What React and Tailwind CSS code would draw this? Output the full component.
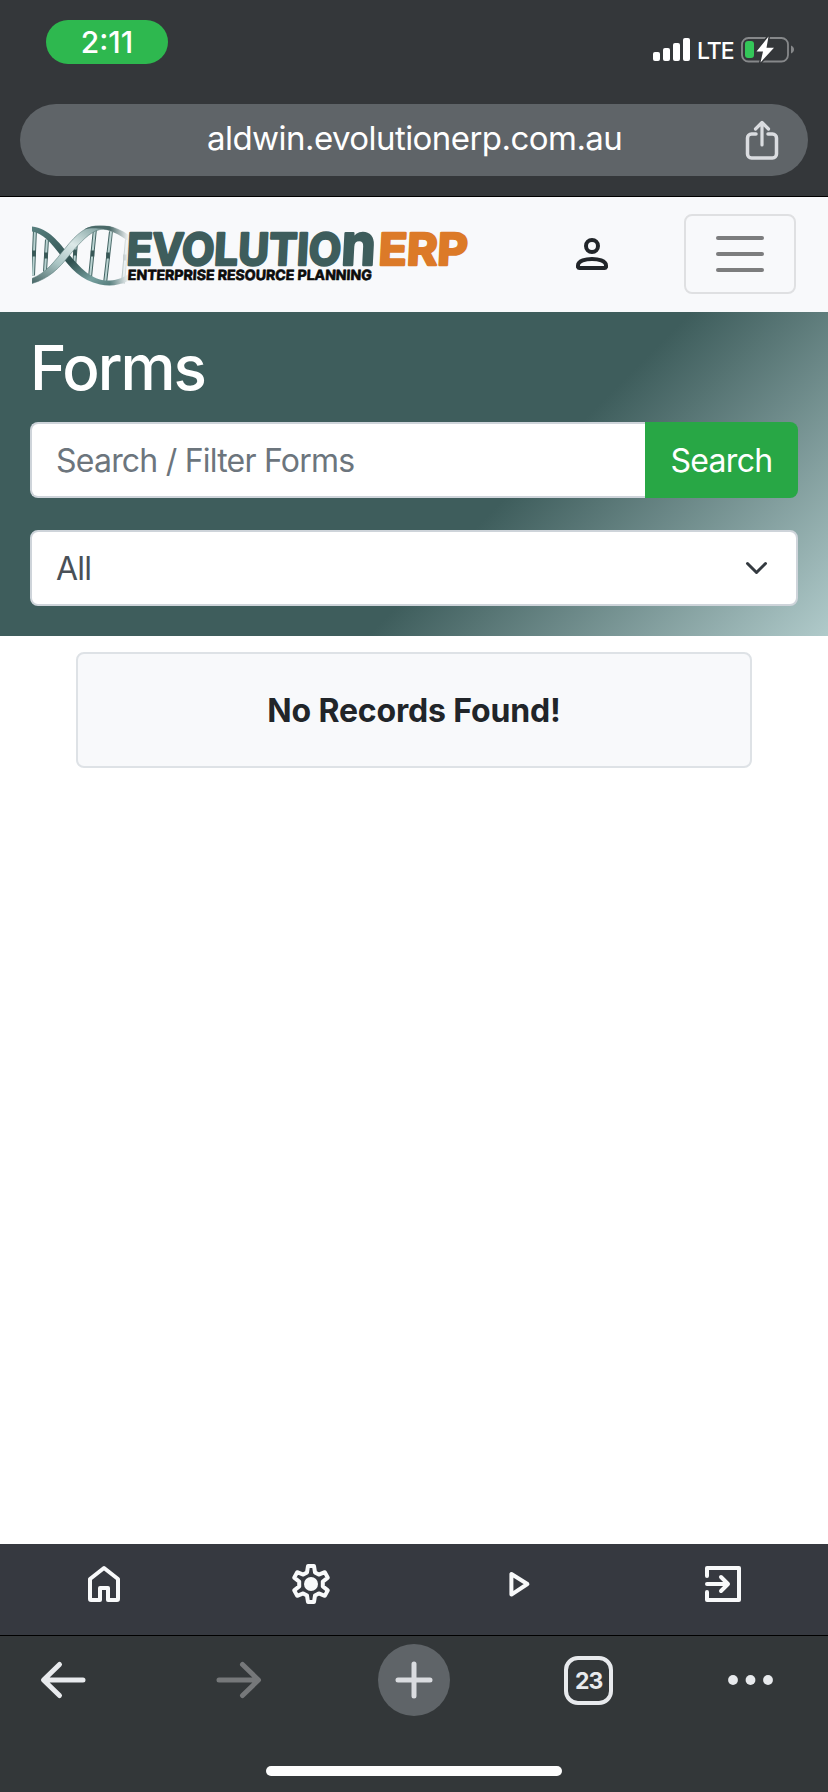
import React from "react";

const StatusBar = () => {
  return (
    <div className="flex h-[104px] justify-between pl-[46px] pr-[33px]">
      <div className="mt-5 flex h-11 w-[122px] items-center justify-center rounded-full bg-[#2eb84f] pt-px text-[30px] font-medium text-white">
        2:11
      </div>
      <div className="mt-[34px] flex h-8 items-center">
        <svg width="37" height="32" viewBox="0 0 37 32" fill="#fff">
          <rect x="0" y="18" width="7" height="9" rx="2" />
          <rect x="10" y="14" width="7" height="13" rx="2" />
          <rect x="20" y="9" width="7" height="18" rx="2" />
          <rect x="30" y="4" width="7" height="23" rx="2" />
        </svg>
        <span className="ml-[7px] w-9 pt-px text-[23px] font-medium leading-8 tracking-[-1px] text-white">
          LTE
        </span>
        <svg
          className="ml-2"
          width="54"
          height="32"
          viewBox="0 0 54 32"
          fill="none"
        >
          <rect x="1" y="4" width="46" height="23.5" rx="6.5" stroke="#86888a" strokeWidth="1.8" />
          <path d="M50 11.5v8c4-1.500 4-6.500 0-8z" fill="#86888a" />
          <rect x="4" y="7" width="9" height="17" rx="3" fill="#34c759" />
          <path
            d="M27.500 2.500L15.500 17.500h6.500l-2.500 11L33 13.800h-7.500z"
            fill="#fff"
            stroke="#34373a"
            strokeWidth="3"
            strokeLinejoin="round"
            paintOrder="stroke"
          />
        </svg>
      </div>
    </div>
  );
};

const AddressBar = () => {
  return (
    <div className="mx-5 flex h-[72px] items-center rounded-full bg-[#5f6468]">
      <span className="ml-[187px] w-[431px] whitespace-nowrap pb-1 text-[33px] leading-[64px] tracking-[-0.55px] text-white">
        aldwin.evolutionerp.com.au
      </span>
      <svg
        className="ml-[106px]"
        width="36"
        height="42"
        viewBox="0 0 36 42"
        fill="none"
        stroke="#dadce0"
        strokeLinecap="round"
        strokeLinejoin="round"
      >
        <path d="M12 15H7.500a4 4 0 0 0-4 4v16a4 4 0 0 0 4 4h21a4 4 0 0 0 4-4V19a4 4 0 0 0-4-4H24" strokeWidth="3.500" />
        <path d="M18 26V4M11.500 10L18 3.500l6.500 6.500" strokeWidth="3.200" />
      </svg>
    </div>
  );
};

const Logo = () => {
  return (
    <svg
      width="450"
      height="90"
      viewBox="0 -15.500 450 90"
      className="ml-8 overflow-visible"
    >
      <defs>
        <linearGradient id="strand" x1="0" y1="1" x2="1" y2="0">
          <stop offset="0" stopColor="#486665" />
          <stop offset="0.3" stopColor="#a9c4c3" />
          <stop offset="0.55" stopColor="#dce9e8" />
          <stop offset="0.8" stopColor="#8aa9a8" />
          <stop offset="1" stopColor="#395958" />
        </linearGradient>
        <linearGradient id="back" x1="0" y1="0" x2="1" y2="1">
          <stop offset="0" stopColor="#58807f" />
          <stop offset="0.5" stopColor="#2f504f" />
          <stop offset="0.75" stopColor="#76a09f" />
          <stop offset="1" stopColor="#426665" />
        </linearGradient>
        <linearGradient id="fade">
          <stop offset="0.8" stopColor="#fff" />
          <stop offset="1" stopColor="#fff" stopOpacity="0" />
        </linearGradient>
        <mask id="fadeMask">
          <rect width="97" height="64" fill="url(#fade)" />
        </mask>
      </defs>

      <g mask="url(#fadeMask)">
        <g stroke="#446564" strokeWidth="4">
          <path d="M3 4L1 50M15 14l-2 32M44 16l-2 26M63 3l-5 49M79 6l-6 52M95 14l-4 44" />
        </g>
        <g stroke="#b9d2d1" strokeWidth="2">
          <path d="M3 4L1 50M15 14l-2 32M44 16l-2 26M63 3l-5 49M79 6l-6 52M95 14l-4 44" />
        </g>
        <g stroke="#385857" strokeWidth="3.500">
          <path d="M2 25v6M14 27v6M43 24v6M60.500 25v6M76 27v6M93 29v6" />
        </g>
        <path
          d="M0 1C17 3 27 17 37 29C48 42 60 56 78 55C86 54.500 92 52 97 48V55C87 60 78 61 68 59C49 55 38 42 28 29C19 17 11 8 0 6z"
          fill="url(#back)"
        />
        <path
          d="M0 58V53C15 47 23 35 33 23C45 8 54 0 68 0C80 0 90 5 97 10V13C87 7 77 3 68 4C58 6 48 17 38 29C27 43 17 53 0 58z"
          fill="url(#strand)"
          stroke="#5d7d7c"
          strokeWidth="0.600"
        />
        <path
          d="M52 4C57 1 62 0 68 0C80 0 90 5 97 10V16C87 9 77 3 66 3C61 2.500 56 3 52 4z"
          fill="#4a6968"
        />
      </g>

      <g
        fontFamily="Inter, sans-serif"
        fontWeight="700"
        strokeLinejoin="round"
        transform="skewX(-3)"
      >
        <text
          x="96"
          y="39"
          fontSize="44"
          textLength="249"
          lengthAdjust="spacingAndGlyphs"
          fill="#3e5d5c"
          stroke="#3e5d5c"
          strokeWidth="2.600"
        >
          EVOLUTIO<tspan fontSize="58">n</tspan>
        </text>
        <text
          x="348"
          y="39"
          fontSize="44"
          textLength="89"
          lengthAdjust="spacingAndGlyphs"
          fill="#dc7a28"
          stroke="#dc7a28"
          strokeWidth="2.600"
        >
          ERP
        </text>
        <text
          x="98.500"
          y="55"
          fontSize="14"
          textLength="244"
          lengthAdjust="spacingAndGlyphs"
          fill="#0b0b0b"
          stroke="#0b0b0b"
          strokeWidth="0.700"
        >
          ENTERPRISE RESOURCE PLANNING
        </text>
      </g>
    </svg>
  );
};

const Navbar = () => {
  return (
    <div className="flex h-[115px] items-center bg-[#f8f9fb]">
      <Logo />
      <svg
        className="ml-[86px]"
        width="48"
        height="48"
        viewBox="0 0 24 24"
        fill="none"
        stroke="#212529"
        strokeWidth="2"
      >
        <circle cx="12" cy="7.500" r="3" />
        <path d="M5 17.300C5 14.800 9 14 12 14s7 .8 7 3.300v.7a.8.8 0 0 1-.8.5H5.800A.8.8 0 0 1 5 18z" />
      </svg>
      <button className="mb-0.5 ml-[68px] flex h-20 w-28 flex-col items-center justify-center gap-3 rounded-lg border-2 border-[#dfe0e2]">
        <span className="h-1 w-12 rounded-full bg-[#7c7d7e]" />
        <span className="h-1 w-12 rounded-full bg-[#7c7d7e]" />
        <span className="h-1 w-12 rounded-full bg-[#7c7d7e]" />
      </button>
    </div>
  );
};

const FilterPanel = () => {
  return (
    <div className="h-[324px] bg-[linear-gradient(135deg,#3e5d5c_60%,#b0caca_100%)] px-[30px] pt-[19px]">
      <h1 className="h-[91px] text-[62px] font-medium leading-[74px] tracking-[-2px] text-white">
        Forms
      </h1>
      <div className="flex h-[76px]">
        <div className="flex flex-1 items-center rounded-l-lg border-2 border-r-0 border-[#ced4da] bg-white pl-6 pt-0.5 text-[32px] tracking-[-0.78px] text-[#6c757d]">
          Search / Filter Forms
        </div>
        <button className="w-[153px] rounded-r-lg bg-[#28a745] pt-0.5 text-[32px] tracking-[-0.7px] text-white">
          Search
        </button>
      </div>
      <div className="mt-8 flex h-[76px] items-center justify-between rounded-lg border-2 border-[#ced4da] bg-white pl-6 pr-7 pt-0.5 text-[32px] tracking-[-0.78px] text-[#495057]">
        All
        <svg
          width="24"
          height="24"
          viewBox="0 0 24 24"
          fill="none"
          stroke="#343a40"
          strokeWidth="3"
          strokeLinecap="round"
          strokeLinejoin="round"
        >
          <path d="M3.500 6.500l9 9 9-9" />
        </svg>
      </div>
    </div>
  );
};

const BottomNav = () => {
  return (
    <div className="grid h-[91px] grid-cols-4 justify-items-center bg-[#363940] pt-4">
      <svg width="48" height="48" viewBox="0 0 24 24" fill="none" stroke="#f8f9fa" strokeWidth="2" strokeLinejoin="round">
        <path d="M5 9.500l7-5.500 7 5.500V19.500a.5.5 0 0 1-.5.5H14v-6h-4v6H5.500a.5.5 0 0 1-.5-.5z" />
      </svg>
      <svg width="48" height="48" viewBox="0 0 24 24" fill="none" stroke="#f8f9fa" strokeWidth="2" strokeLinejoin="round">
        <path d="M10.500 3h3l.5 3.200 1.900 1.100 3-1.200 1.500 2.700-2.500 2v2.400l2.500 2-1.500 2.700-3-1.200-1.900 1.100-.5 3.200h-3l-.5-3.200-1.900-1.100-3 1.200-1.500-2.700 2.500-2v-2.400l-2.500-2 1.500-2.700 3 1.200L10 6.200z" />
        <circle cx="12" cy="12" r="3.500" fill="#f8f9fa" stroke="none" />
      </svg>
      <svg width="48" height="48" viewBox="0 0 24 24" fill="none" stroke="#f8f9fa" strokeWidth="2" strokeLinejoin="round">
        <path d="M8.700 7v10.300L16.700 12z" />
      </svg>
      <svg
        className="-translate-x-0.5"
        width="48"
        height="48"
        viewBox="0 0 24 24"
        fill="none"
        stroke="#f8f9fa"
        strokeWidth="2"
        strokeLinecap="round"
        strokeLinejoin="round"
      >
        <path d="M4 8V4h16v16H4v-4" />
        <path d="M4 12h9.500M11 8.500l3.500 3.500-3.500 3.500" />
      </svg>
    </div>
  );
};

const BrowserToolbar = () => {
  return (
    <div className="h-[157px] border-t border-black bg-[#333739]">
      <div className="flex h-[88px] items-center justify-between pl-[39px] pr-[54px]">
        <svg width="48" height="40" viewBox="0 0 48 40" fill="none" stroke="#e8eaed" strokeWidth="5" strokeLinecap="round" strokeLinejoin="round">
          <path d="M44 20H5M20.500 4.500L4.500 20l16 15.500" />
        </svg>
        <svg className="ml-[13px]" width="48" height="40" viewBox="0 0 48 40" fill="none" stroke="#76787a" strokeWidth="5" strokeLinecap="round" strokeLinejoin="round">
          <path d="M4 20h39M27.500 4.500l16 15.500-16 15.500" />
        </svg>
        <div className="flex h-[72px] w-[72px] items-center justify-center rounded-full bg-[#5f6468]">
          <svg width="40" height="40" viewBox="0 0 40 40" fill="none" stroke="#dadce0" strokeWidth="5" strokeLinecap="round">
            <path d="M20 4v32M4 20h32" />
          </svg>
        </div>
        <div className="flex h-[49px] w-[49px] items-center justify-center rounded-[14px] border-4 border-[#e8eaed] pt-0.5 text-[23px] font-bold tracking-[-0.8px] text-[#e8eaed]">
          23
        </div>
        <svg width="46" height="10" viewBox="0 0 46 10" fill="#e8eaed">
          <circle cx="5" cy="5" r="4.900" />
          <circle cx="22.500" cy="5" r="4.900" />
          <circle cx="40" cy="5" r="4.900" />
        </svg>
      </div>
      <div className="mx-auto mt-[42px] h-2.5 w-[296px] rounded-full bg-[#fdfdfd]" />
    </div>
  );
};

const App = () => {
  return (
    <div className="flex h-[1792px] w-[828px] flex-col overflow-hidden bg-white font-[Inter,sans-serif]">
      <div className="h-[197px] border-b border-black bg-[#34373a]">
        <StatusBar />
        <AddressBar />
      </div>
      <Navbar />
      <FilterPanel />
      <div className="flex-1 px-[76px] pt-4">
        <div className="flex h-[116px] items-center justify-center rounded-lg border-2 border-[#dee2e6] bg-[#f8f9fb] pt-0.5 text-[32px] font-bold tracking-[-0.15px] text-[#212529]">
          No Records Found!
        </div>
      </div>
      <BottomNav />
      <BrowserToolbar />
    </div>
  );
};

export default App;
